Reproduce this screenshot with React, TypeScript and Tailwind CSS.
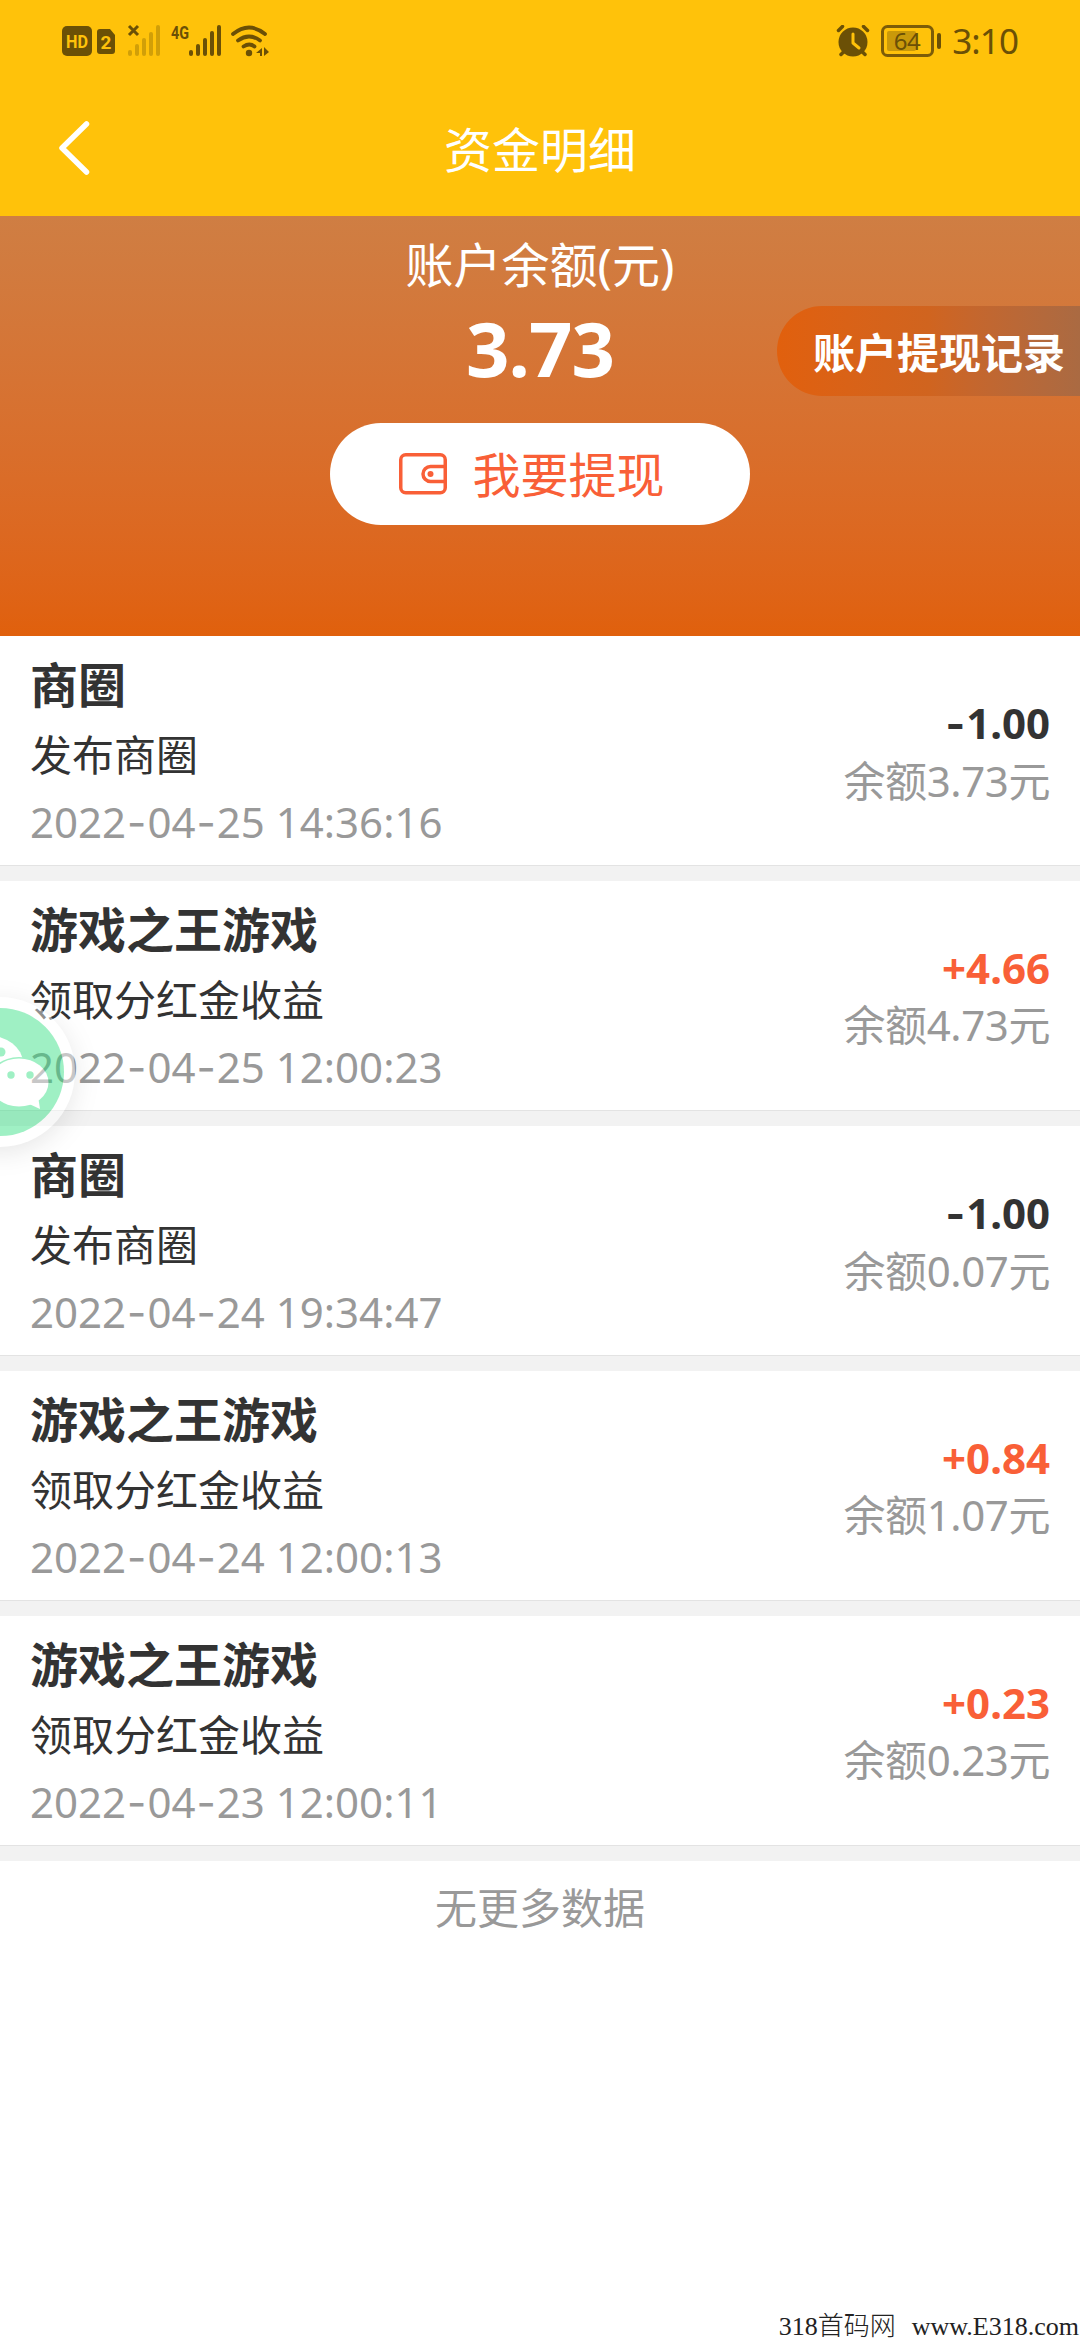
import React from 'react';

type FundRecord = {
  id: number;
  title: string;
  remark: string;
  time: string;
  amount: string;
  balance: string;
};

const records: FundRecord[] = [
  { id: 1, title: '商圈', remark: '发布商圈', time: '2022-04-25 14:36:16', amount: '-1.00', balance: '3.73' },
  { id: 2, title: '游戏之王游戏', remark: '领取分红金收益', time: '2022-04-25 12:00:23', amount: '+4.66', balance: '4.73' },
  { id: 3, title: '商圈', remark: '发布商圈', time: '2022-04-24 19:34:47', amount: '-1.00', balance: '0.07' },
  { id: 4, title: '游戏之王游戏', remark: '领取分红金收益', time: '2022-04-24 12:00:13', amount: '+0.84', balance: '1.07' },
  { id: 5, title: '游戏之王游戏', remark: '领取分红金收益', time: '2022-04-23 12:00:11', amount: '+0.23', balance: '0.23' },
];

// Inter's hyphen is wider than the one in Noto Sans
const Numeric = ({ value }: { value: string }) => (
  <>
    {value.split(/(-)/).map((part, i) =>
      part === '-' ? (
        <span key={i} className="font-['Inter',sans-serif] px-px">-</span>
      ) : (
        <span key={i}>{part}</span>
      )
    )}
  </>
);

const StatusBar = () => (
  <div className="flex h-[82px] items-center justify-between pl-[62px] pr-[62px] text-[#6b5006]">
    <svg width="208" height="36" viewBox="0 -2 208 36" fill="currentColor">
      <rect x="0" y="1" width="30" height="30" rx="5" />
      <text x="15" y="22.500" textAnchor="middle" fontSize="18" fontWeight="700" textLength="22" lengthAdjust="spacingAndGlyphs" fill="#ffc20a" fontFamily="Roboto, sans-serif">HD</text>
      <path d="M38 4h10l5 6v16a3 3 0 0 1-3 3H38a3 3 0 0 1-3-3V7a3 3 0 0 1 3-3z" />
      <text x="44" y="23.500" textAnchor="middle" fontSize="19" fontWeight="700" fill="#ffc20a" fontFamily="Roboto, sans-serif">2</text>
      <path d="M67 1l9 9M76 1l-9 9" stroke="currentColor" strokeWidth="3" />
      <g opacity=".3">
        <rect x="66" y="25" width="4" height="6" rx="2" />
        <rect x="73" y="19" width="4" height="12" rx="2" />
        <rect x="80" y="13" width="4" height="18" rx="2" />
        <rect x="87" y="7" width="4" height="24" rx="2" />
        <rect x="94" y="0" width="4" height="31" rx="2" />
      </g>
      <text x="109" y="14" fontSize="18" fontWeight="700" textLength="18" lengthAdjust="spacingAndGlyphs" fontFamily="Roboto, sans-serif">4G</text>
      <rect x="127" y="25" width="4" height="6" rx="2" />
      <rect x="134" y="19" width="4" height="12" rx="2" />
      <rect x="141" y="13" width="4" height="18" rx="2" />
      <rect x="148" y="6" width="4" height="25" rx="2" />
      <rect x="155" y="0" width="4" height="31" rx="2" />
      <g fill="none" stroke="currentColor" strokeWidth="3.800" strokeLinecap="round">
        <path d="M171 9q16-13 32 0" />
        <path d="M176 15.500q11-8 22 0" />
        <path d="M181.500 21.500q6-4 11 0" />
      </g>
      <circle cx="187" cy="28" r="3.200" />
      <path d="M194 28l6-5v8h-2v-3zM202 22l5 5-5 4z" />
    </svg>
    <div className="flex items-center">
      <svg width="34" height="32" viewBox="0 0 34 32" className="mr-[11px]">
        <g stroke="currentColor" strokeWidth="3.500" strokeLinecap="round" fill="none">
          <path d="M2.500 5.500l4-4M31.500 5.500l-4-4M5 29.500l4-4M29 29.500l-4-4" />
        </g>
        <circle cx="17" cy="17" r="14.500" fill="currentColor" />
        <path d="M17 9v9l6 5" stroke="#ffc20a" strokeWidth="3" strokeLinecap="round" strokeLinejoin="round" fill="none" />
      </svg>
      <svg width="60" height="32" viewBox="0 0 60 32" className="mr-[11px]">
        <rect x="1.500" y="1.500" width="50" height="29" rx="5" fill="none" stroke="#7c5c08" strokeWidth="3" />
        <rect x="6" y="6" width="29" height="20" rx="2" fill="#c9990a" />
        <text x="26" y="24.500" textAnchor="middle" fontSize="24" letterSpacing="-.5" fill="#6b5006" fontFamily="Noto Sans, sans-serif">64</text>
        <rect x="56" y="8" width="4" height="16" rx="2" fill="currentColor" />
      </svg>
      <span className="font-['Noto_Sans',sans-serif] text-[35px] leading-[40px] tracking-[-0.9px]">3:10</span>
    </div>
  </div>
);

const NavBar = () => (
  <div className="grid h-[136px] grid-cols-3 items-center">
    <svg width="34" height="56" viewBox="0 0 34 56" className="ml-[58px] -mt-1">
      <path d="M28.500 4L4 28l24.500 24" fill="none" stroke="#fff" strokeWidth="5.500" strokeLinecap="round" strokeLinejoin="round" />
    </svg>
    <h1 className="text-center text-5xl leading-[72px] text-white">资金明细</h1>
  </div>
);

const WalletIcon = () => (
  <svg width="48" height="42" viewBox="0 0 48 42" fill="none" stroke="currentColor" strokeWidth="3.500">
    <rect x="1.750" y="1.750" width="44.500" height="38" rx="5" />
    <path d="M46.500 13.500H31.500a7.500 7.500 0 0 0 0 15h15" />
    <circle cx="31.500" cy="21" r="3" fill="currentColor" stroke="none" />
  </svg>
);

const BalancePanel = () => (
  <section className="relative flex h-[420px] flex-col items-center bg-linear-to-b from-[#cf7e43] to-[#e0600c] text-white">
    <p className="mt-[13px] text-5xl leading-[72px]">账户余额(元)</p>
    <p className="mt-[5px] font-['Noto_Sans',sans-serif] text-[76px] leading-[84px] font-bold tracking-[-1px]">3.73</p>
    <button className="mt-[33px] flex h-[102px] w-[420px] items-center justify-center gap-[25px] rounded-full bg-white pr-4 text-5xl text-[#f95f37]">
      <WalletIcon />
      <span className="pt-0.5">我要提现</span>
    </button>
    <a className="absolute top-[90px] right-0 flex h-[90px] w-[303px] items-center rounded-l-full bg-linear-to-r from-[#e1600d] via-[#d0641f] to-[#aa6a42] pt-0.5 pl-9 text-[42px] font-bold whitespace-nowrap">
      账户提现记录
    </a>
  </section>
);

const RecordRow = ({ record }: { record: FundRecord }) => (
  <li className="flex h-[245px] items-center justify-between border-b-[15px] border-[#f2f2f2] px-[30px] shadow-[inset_0_-1px_0_#e3e3e3]">
    <div className="pt-[3px] text-[#333]">
      <h2 className="text-5xl leading-[72px] font-bold">{record.title}</h2>
      <p className="text-[42px] leading-[68px]">{record.remark}</p>
      <p className="text-[42px] leading-[66px] text-[#999]"><Numeric value={record.time} /></p>
    </div>
    <div className="text-right text-[42px]">
      <p className={record.amount.startsWith('+') ? 'font-bold leading-[58px] text-[#f95f37]' : 'font-bold leading-[58px] text-[#333]'}>
        <Numeric value={record.amount} />
      </p>
      <p className="leading-[56px] tracking-[-0.4px] text-[#999]">余额{record.balance}元</p>
    </div>
  </li>
);

const WechatFloat = () => (
  <div className="absolute top-[997px] -left-[75px] h-[150px] w-[150px] rounded-full bg-white opacity-45 shadow-[0_6px_24px_rgba(0,0,0,0.2)]">
    <svg width="150" height="150" viewBox="0 0 150 150">
      <circle cx="75" cy="75" r="64" fill="#2cde7e" />
      <ellipse cx="61" cy="66" rx="37" ry="28" fill="#fff" />
      <circle cx="76" cy="55" r="4.500" fill="#2cde7e" />
      <ellipse cx="94" cy="85.500" rx="31" ry="25.500" fill="#2cde7e" />
      <ellipse cx="94" cy="85.500" rx="29.500" ry="24" fill="#fff" />
      <path d="M102 106l13 6-2-13z" fill="#fff" />
      <circle cx="86" cy="78" r="3.700" fill="#2cde7e" />
      <circle cx="105" cy="78" r="3.700" fill="#2cde7e" />
    </svg>
  </div>
);

export default function App() {
  return (
    <div className="relative flex h-[2340px] w-[1080px] flex-col overflow-hidden bg-white font-['Noto_Sans','Noto_Sans_CJK_SC',sans-serif]">
      <header className="h-[216px] bg-[#ffc20a]">
        <StatusBar />
        <NavBar />
      </header>
      <BalancePanel />
      <ul>
        {records.map((record) => (
          <RecordRow key={record.id} record={record} />
        ))}
      </ul>
      <p className="mt-4 text-center text-[42px] leading-[62px] text-[#999]">无更多数据</p>
      <footer className="mt-auto flex justify-end gap-4 pr-px font-['Liberation_Serif','Noto_Sans_CJK_SC',serif] text-[26px] leading-[26px] font-light text-[#222]">
        <span>318首码网</span>
        <span>www.E318.com</span>
      </footer>
      <WechatFloat />
    </div>
  );
}
